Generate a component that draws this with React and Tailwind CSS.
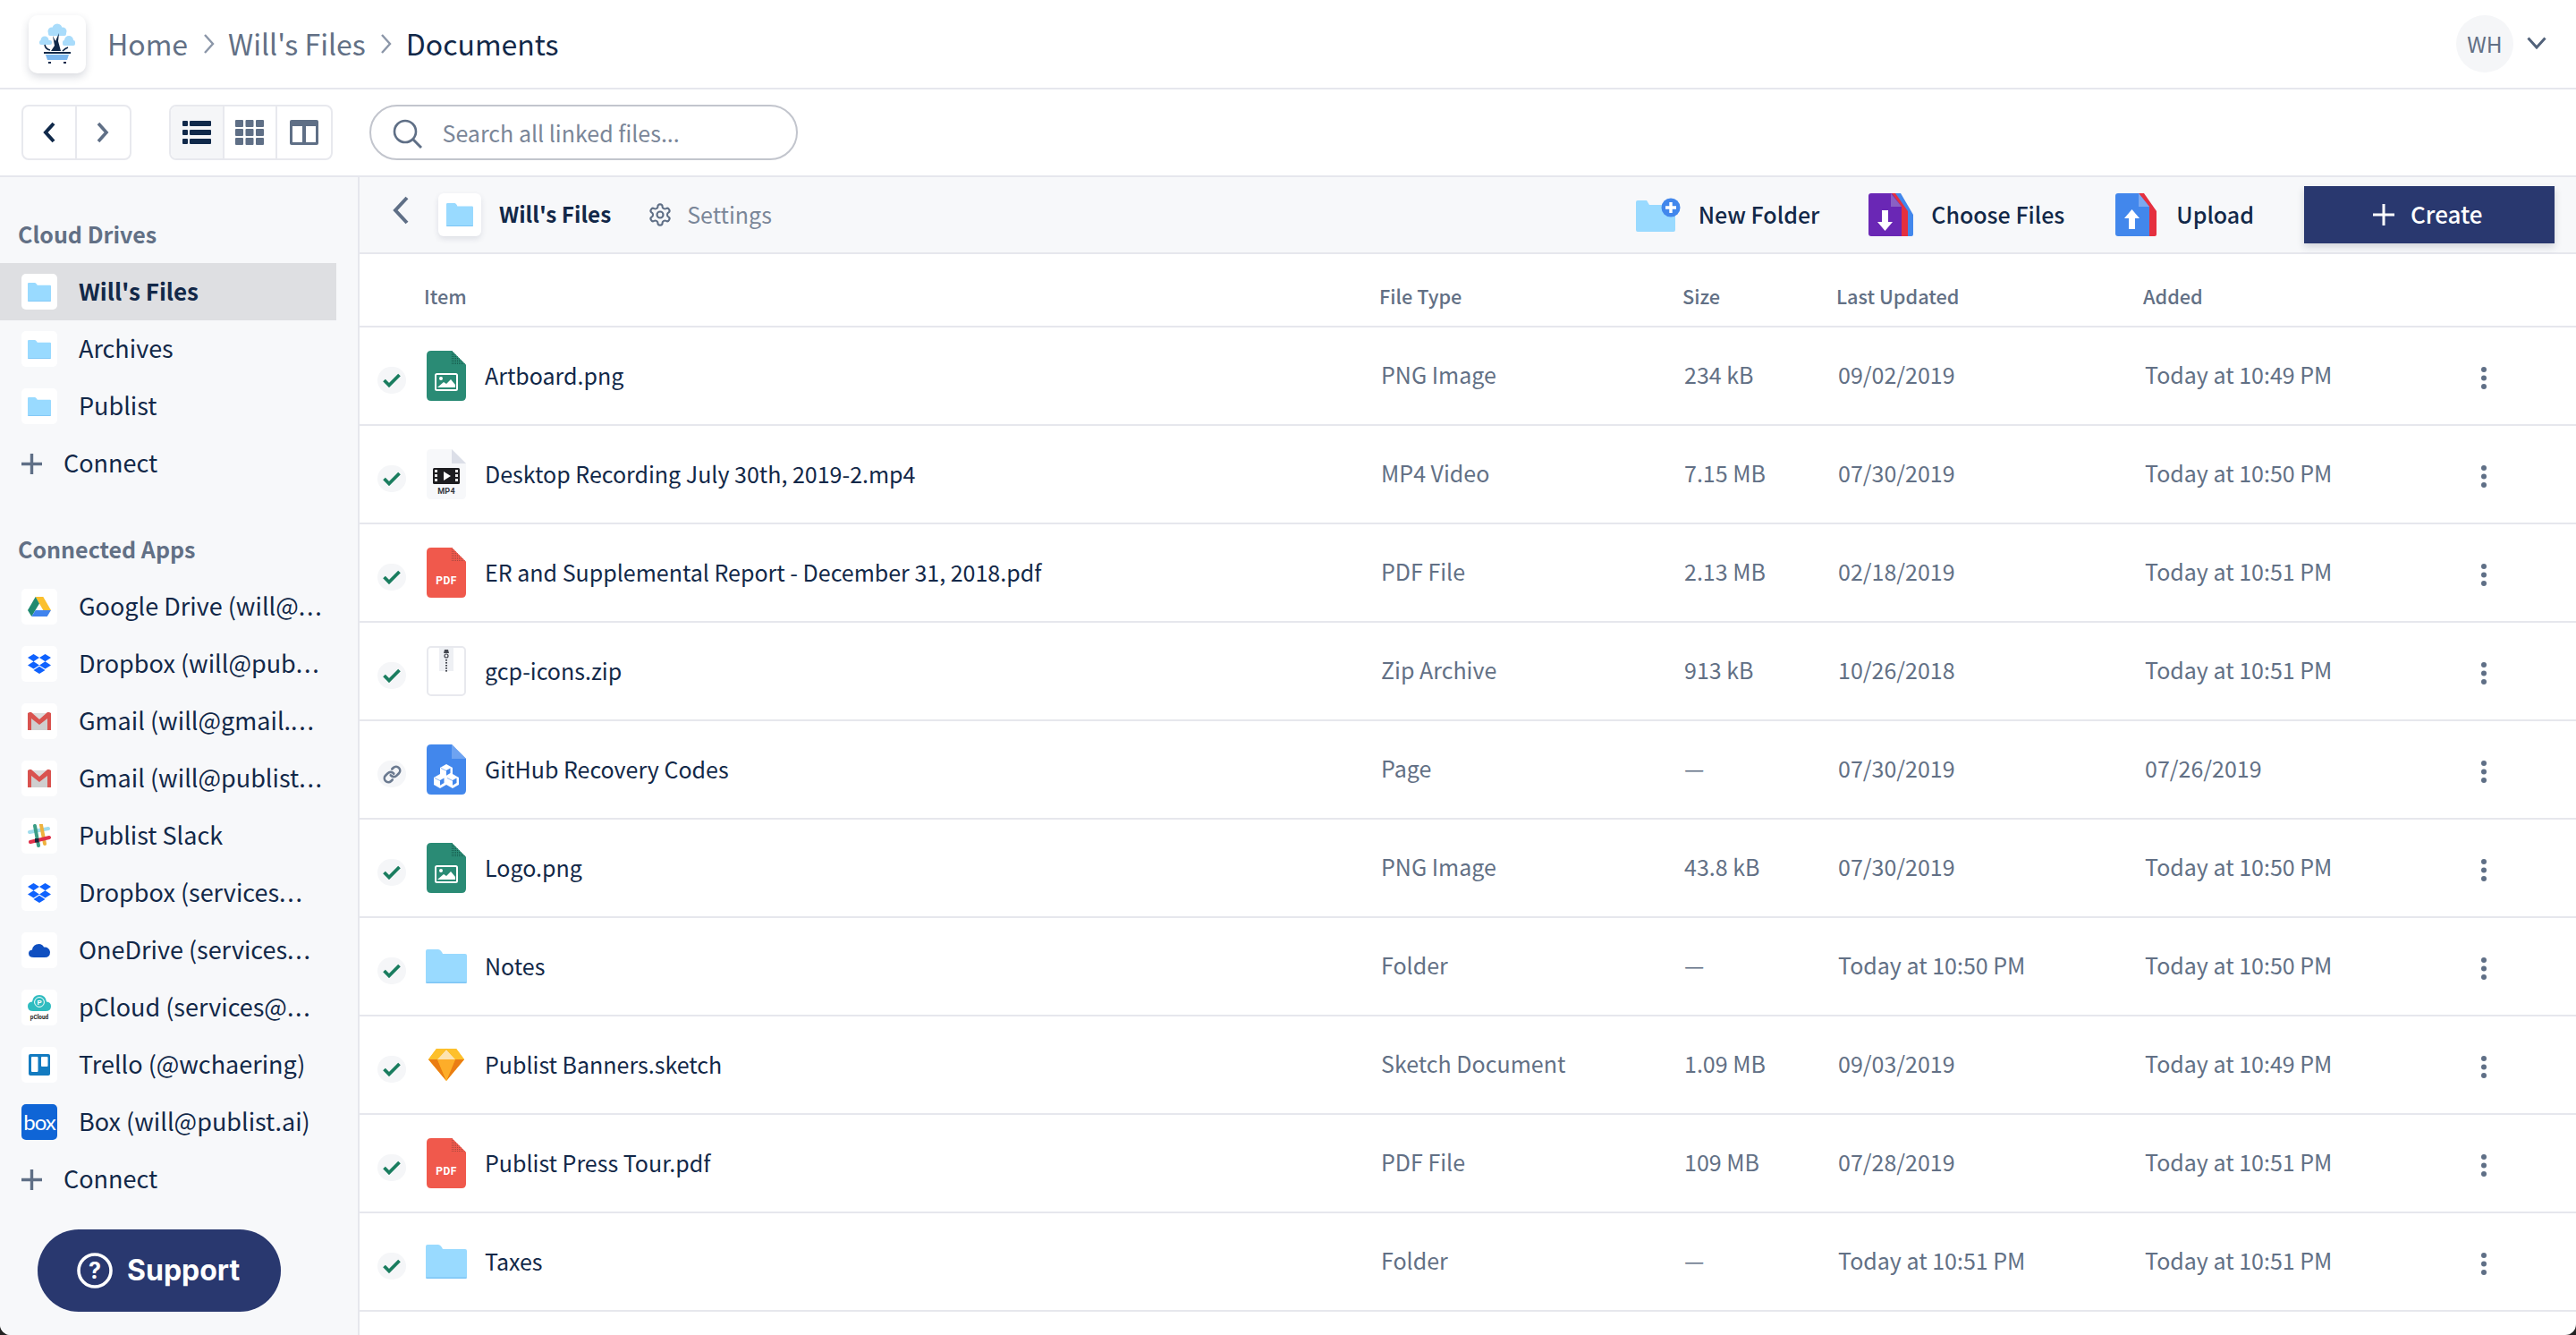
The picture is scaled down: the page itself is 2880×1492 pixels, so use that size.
import React from "react";
import { Link as LinkIcon } from "lucide-react";

const dark = "text-[#122848]";

function FolderIcon({ w, h }) {
  return (
    <svg width={w} height={h} viewBox="0 0 46 38" preserveAspectRatio="none">
      <path d="M2 0H14Q16 0 18 3L19 5H44Q46 5 46 7V36Q46 38 44 38H2Q0 38 0 36V2Q0 0 2 0Z" fill="#99daff" />
      <path d="M0 36.500H46V36.500Q46 38 44 38H2Q0 38 0 36.500Z" fill="#7cc4f5" />
    </svg>
  );
}

function Tile({ children, bg = "bg-white" }) {
  return <div className={`w-[40px] h-[40px] rounded-[5px] flex items-center justify-center shrink-0 ${bg}`}>{children}</div>;
}

function Sheet({ fill, fold, children, id, dots }) {
  return (
    <svg width="44" height="56" viewBox="0 0 44 56">
      <defs>
        <pattern id={id} width="2" height="2" patternUnits="userSpaceOnUse">
          <rect width="1" height="1" fill={dots} />
        </pattern>
      </defs>
      <path d="M5 0H28L44 16V51Q44 56 39 56H5Q0 56 0 51V5Q0 0 5 0Z" fill={fill} />
      <path d="M28 0L44 16H28Z" fill={fold} />
      <path d="M28 0L44 16H28Z" fill={`url(#${id})`} />
      {children}
    </svg>
  );
}

function ImageFile({ id }) {
  return (
    <Sheet id={id} fill="#2a8b75" fold="#2a8b75" dots="#14584a">
      <rect x="10" y="26" width="24" height="18" rx="1.5" fill="none" stroke="#fff" strokeWidth="2" />
      <circle cx="16" cy="31" r="2" fill="#fff" />
      <path d="M12 41L19 35L22 37L27 32L32 38V41Z" fill="#fff" />
    </Sheet>
  );
}

function PdfFile({ id }) {
  return (
    <Sheet id={id} fill="#f0594c" fold="#f0594c" dots="#a8483f">
      <text x="22" y="41" textAnchor="middle" fontSize="12" fontWeight="700" fill="#fff" letterSpacing="0.4" fontFamily="'Roboto','Liberation Sans',sans-serif">PDF</text>
    </Sheet>
  );
}

function VideoFile() {
  return (
    <svg width="44" height="56" viewBox="0 0 44 56">
      <path d="M5 0H28L44 16V51Q44 56 39 56H5Q0 56 0 51V5Q0 0 5 0Z" fill="#f7f8fa" />
      <path d="M28 0L44 16H28Z" fill="#dcdfe8" />
      <rect x="7" y="21" width="30" height="18" rx="1.5" fill="#1d1d20" />
      {[23, 28, 33].map((y) => (
        <g key={y}>
          <rect x="9" y={y} width="3" height="3" fill="#e8e8e8" />
          <rect x="32" y={y} width="3" height="3" fill="#e8e8e8" />
        </g>
      ))}
      <path d="M19 25L27 30L19 35Z" fill="#fff" />
      <text x="22" y="50" textAnchor="middle" fontSize="9" fontWeight="700" fill="#33363d" letterSpacing="0.3" fontFamily="'Roboto','Liberation Sans',sans-serif">MP4</text>
    </svg>
  );
}

function ZipFile() {
  return (
    <svg width="44" height="56" viewBox="0 0 44 56">
      <rect x="1" y="1" width="42" height="54" rx="4" fill="#fff" stroke="#e8e9ee" strokeWidth="2" />
      <rect x="14" y="2" width="16" height="26" fill="#eef0f4" />
      <path d="M20 4h4l1 4h-6z" fill="#44474f" />
      <circle cx="22" cy="11" r="2" fill="none" stroke="#44474f" strokeWidth="1.2" />
      {[15, 18, 21, 24, 27].map((y) => (
        <rect key={y} x="21" y={y} width="2" height="1.6" fill="#44474f" />
      ))}
    </svg>
  );
}

function Cube({ x, y }) {
  return (
    <g transform={`translate(${x} ${y})`}>
      <path d="M7 0L14 4V12L7 16L0 12V4Z" fill="#fff" />
      <path d="M7 7L11.500 4.600V10L7 12.800Z" fill="#4287ec" />
      <path d="M1 4.500L7 7.500" stroke="#4287ec" strokeWidth=".6" />
    </g>
  );
}

function PageFile() {
  return (
    <svg width="44" height="56" viewBox="0 0 44 56">
      <path d="M5 0H28L44 16V51Q44 56 39 56H5Q0 56 0 51V5Q0 0 5 0Z" fill="#4287ec" />
      <path d="M28 0L44 16H28Z" fill="#6ea3f1" />
      <Cube x="15" y="22" />
      <Cube x="8" y="33" />
      <Cube x="22" y="33" />
    </svg>
  );
}

function SketchIcon() {
  return (
    <svg width="40" height="36" viewBox="0 0 40 36">
      <path d="M9 0H31L40 12L20 36L0 12Z" fill="#fdb300" />
      <path d="M0 12H10L20 36Z" fill="#ea7d14" />
      <path d="M40 12H30L20 36Z" fill="#ea7d14" />
      <path d="M10 12H30L20 36Z" fill="#fdad29" />
      <path d="M9 0H20L10 12H0Z" fill="#fdc02c" />
      <path d="M31 0H20L30 12H40Z" fill="#fdc02c" />
      <path d="M20 1L30 12H10Z" fill="#fde3b0" />
    </svg>
  );
}

const drop = "M6 1.807L0 5.629l6 3.822 6.001-3.822L6 1.807zM18 1.807l-6 3.822 6 3.822 6-3.822-6-3.822zM0 13.274l6 3.822 6.001-3.822L6 9.452l-6 3.822zM18 9.452l-6 3.822 6 3.822 6-3.822-6-3.822zM6 18.371l6.001 3.822 6-3.822-6-3.822L6 18.371z";

function Dropbox() {
  return <svg width="26" height="26" viewBox="0 0 24 24"><path d={drop} fill="#0f62fe" /></svg>;
}
function Drive() {
  return (
    <svg width="26" height="22" viewBox="0 0 26 22">
      <path d="M8.700 0H17.300L26 15H17.300Z" fill="#fbc02d" />
      <path d="M8.700 0L13 7.500L4.300 22L0 15Z" fill="#1f8a70" />
      <path d="M8.700 15H26L21.700 22H4.300Z" fill="#3f83ee" />
    </svg>
  );
}
function Gmail() {
  return (
    <svg width="26" height="20" viewBox="0 0 26 20">
      <rect y="1" width="26" height="19" fill="#dcdcdc" />
      <path d="M4 20V7L13 14L22 7V20Z" fill="#cfcfcf" />
      <path d="M0 1L2 0H4L13 8L22 0H24L26 1V20H22V7L13 14L4 7V20H0Z" fill="#d9534f" />
    </svg>
  );
}
function Slack() {
  return (
    <svg width="26" height="26" viewBox="0 0 26 26">
      <g strokeWidth="4" strokeLinecap="round">
        <path d="M2 9L23 5" stroke="#9fdcec" />
        <path d="M8 2L12 24" stroke="#3b9d85" />
        <path d="M15 1L19 22" stroke="#eeb23f" />
        <path d="M3 20L24 15" stroke="#e0314a" />
      </g>
      <rect x="8" y="16" width="4.500" height="4.500" fill="#1a2438" />
    </svg>
  );
}
function OneDrive() {
  return (
    <svg width="24" height="16" viewBox="0 0 24 16">
      <path d="M6 16Q0 16 0 11.500Q0 8 4 7.500Q5 1 11.500 1Q15.500 1 17 4.500Q23 4 24 10Q24 16 18 16Z" fill="#0f4fc0" />
    </svg>
  );
}
function PCloud() {
  return (
    <svg width="28" height="32" viewBox="0 0 28 32">
      <path d="M7 20Q1 20 1 14.500Q1 10 6 9.500Q7 2 14 2Q21 2 22 9.500Q27 10 27 14.500Q27 20 21 20Z" fill="#2fbcc0" />
      <circle cx="14" cy="10" r="5.400" fill="none" stroke="#fff" strokeWidth="1" />
      <text x="14" y="13" textAnchor="middle" fontSize="8" fontWeight="700" fill="#fff" fontFamily="'Roboto',sans-serif">P</text>
      <text x="14" y="29" textAnchor="middle" fontSize="6.4" fontWeight="700" fill="#222" fontFamily="'Roboto',sans-serif">pCloud</text>
    </svg>
  );
}
function Trello() {
  return (
    <svg width="24" height="24" viewBox="0 0 24 24">
      <rect width="24" height="24" rx="2" fill="#137bc0" />
      <rect x="3" y="3" width="7.500" height="17" rx="1" fill="#fff" />
      <rect x="14" y="3" width="7.500" height="11" rx="1" fill="#fff" />
    </svg>
  );
}

function PlusRow() {
  return (
    <div className="h-[64px] flex items-center pl-[24px]">
      <svg width="23" height="23" viewBox="0 0 23 23"><path d="M11.500 0V23M0 11.500H23" stroke="#5f6f86" strokeWidth="3.4" /></svg>
      <span className={`ml-[24px] mb-[3px] text-[27px] leading-[40px] ${dark}`}>Connect</span>
    </div>
  );
}

function SideRow({ label, cut, icon, active, tileBg }) {
  return (
    <div className={`h-[64px] w-[376px] flex items-center pl-[24px] ${active ? "bg-[#dedfe2]" : ""}`}>
      <Tile bg={tileBg}>{icon}</Tile>
      <span className={`ml-[24px] mb-[3px] w-[276px] whitespace-nowrap leading-[40px] ${dark} ${active ? "font-semibold text-[26px]" : "text-[27px]"}`}>
        {label}
        {cut ? <span className="tracking-[1.7px]">...</span> : null}
      </span>
    </div>
  );
}

const folderSmall = <FolderIcon w={26} h={21} />;
const apps = [
  ["Google Drive (will@", <Drive />, true],
  ["Dropbox (will@pub", <Dropbox />, true],
  ["Gmail (will@gmail.", <Gmail />, true],
  ["Gmail (will@publist", <Gmail />, true],
  ["Publist Slack", <Slack />],
  ["Dropbox (services", <Dropbox />, true],
  ["OneDrive (services", <OneDrive />, true],
  ["pCloud (services@", <PCloud />, true],
  ["Trello (@wchaering)", <Trello />],
];

const rows = [
  ["Artboard.png", <ImageFile id="d1" />, "PNG Image", "234 kB", "09/02/2019", "Today at 10:49 PM"],
  ["Desktop Recording July 30th, 2019-2.mp4", <VideoFile />, "MP4 Video", "7.15 MB", "07/30/2019", "Today at 10:50 PM"],
  ["ER and Supplemental Report - December 31, 2018.pdf", <PdfFile id="d2" />, "PDF File", "2.13 MB", "02/18/2019", "Today at 10:51 PM"],
  ["gcp-icons.zip", <ZipFile />, "Zip Archive", "913 kB", "10/26/2018", "Today at 10:51 PM"],
  ["GitHub Recovery Codes", <PageFile />, "Page", "—", "07/30/2019", "07/26/2019", true],
  ["Logo.png", <ImageFile id="d3" />, "PNG Image", "43.8 kB", "07/30/2019", "Today at 10:50 PM"],
  ["Notes", <FolderIcon w={46} h={38} />, "Folder", "—", "Today at 10:50 PM", "Today at 10:50 PM"],
  ["Publist Banners.sketch", <SketchIcon />, "Sketch Document", "1.09 MB", "09/03/2019", "Today at 10:49 PM"],
  ["Publist Press Tour.pdf", <PdfFile id="d4" />, "PDF File", "109 MB", "07/28/2019", "Today at 10:51 PM"],
  ["Taxes", <FolderIcon w={46} h={38} />, "Folder", "—", "Today at 10:51 PM", "Today at 10:51 PM"],
];

function Cell({ children }) {
  return <span className="text-[25px] leading-[36px] text-[#627085] mb-[4px]">{children}</span>;
}

function Row({ r }) {
  const [name, icon, type, size, upd, added, linked] = r;
  return (
    <div className="h-[110px] border-b-2 border-[#e6e7ed] grid grid-cols-[1142px_339px_172px_343px_1fr] items-center">
      <div className="flex items-center">
        <div className="ml-[20px] mt-[10px] w-[32px] h-[30px] rounded-full bg-[#f5f6f8] flex items-center justify-center">
          {linked ? (
            <LinkIcon size={21} strokeWidth={3} className="text-[#6b7a90]" />
          ) : (
            <svg width="20" height="16" viewBox="0 0 20 16"><path d="M1.500 8L7 13.500L18.500 2" fill="none" stroke="#1a7d5f" strokeWidth="3.8" /></svg>
          )}
        </div>
        <div className="ml-[22px] w-[46px] h-[56px] flex items-center justify-center">{icon}</div>
        <span className={`ml-[20px] mb-[2px] text-[25px] leading-[40px] ${dark}`}>{name}</span>
      </div>
      <Cell>{type}</Cell>
      <Cell>{size}</Cell>
      <Cell>{upd}</Cell>
      <div className="flex items-center justify-between pr-[100px]">
        <Cell>{added}</Cell>
        <svg width="6" height="25" viewBox="0 0 6 25" className="mt-[4px]"><g fill="#5f6f86"><circle cx="3" cy="3" r="3" /><circle cx="3" cy="12.500" r="3" /><circle cx="3" cy="22" r="3" /></g></svg>
      </div>
    </div>
  );
}

function ToolCell({ children, active, last }) {
  return (
    <div className={`w-[59.500px] flex items-center justify-center ${last ? "" : "border-r-2 border-[#e8e9ee]"} ${active ? "bg-[#f5f6f8]" : ""}`}>{children}</div>
  );
}

function Action({ icon, label, className = "" }) {
  return (
    <div className={`flex items-center ${className}`}>
      {icon}
      <span className={`text-[25px] leading-[40px] font-medium mb-[2px] ${dark}`}>{label}</span>
    </div>
  );
}

export default function App() {
  return (
    <div className="w-[2880px] h-[1492px] overflow-hidden bg-[#222] font-['Noto_Sans_CJK_KR','Lato',sans-serif]">
      <div className="h-full flex flex-col bg-white rounded-b-[12px] overflow-hidden">
        <header className="h-[100px] shrink-0 border-b-2 border-[#e6e7ed] flex items-center pl-[32px] pr-[33px]">
          <div className="w-[64px] h-[65px] rounded-[10px] bg-white shadow-[0_4px_10px_rgba(40,50,80,0.18)] flex items-center justify-center">
            <svg width="42" height="46" viewBox="0 0 42 46">
              <g fill="#a9dcfb">
                <circle cx="21" cy="6" r="5.500" /><circle cx="15" cy="9" r="4.500" /><circle cx="27" cy="9" r="4.500" /><rect x="11" y="8" width="20" height="6" rx="2" />
                <circle cx="7" cy="19" r="4.500" /><rect x="1" y="19" width="14" height="5" rx="2" />
                <circle cx="34" cy="19" r="5" /><rect x="27" y="19" width="14" height="6" rx="2" />
              </g>
              <path d="M23 11L22 20L25 31H14L18 25L16 14L19 20Z" fill="#10294a" />
              <path d="M7 24Q8 29 13 30M33 27Q30 28 27 31" stroke="#10294a" strokeWidth="1.6" fill="none" />
              <rect x="6" y="32" width="30" height="2" fill="#10294a" />
              <path d="M8 35H34L32 41H10Z" fill="#7ab6ee" />
              <rect x="11" y="43" width="3" height="2" fill="#10294a" /><rect x="28" y="43" width="3" height="2" fill="#10294a" />
            </svg>
          </div>
          <span className="ml-[24px] mb-[3px] text-[32px] leading-[48px] text-[#627085]">Home</span>
          <svg className="ml-[17px]" width="14" height="24" viewBox="0 0 14 24"><path d="M2 2L11 12L2 22" fill="none" stroke="#8b96a8" strokeWidth="2.4" /></svg>
          <span className="ml-[14px] mb-[3px] text-[32px] leading-[48px] text-[#627085]">Will's Files</span>
          <svg className="ml-[16px]" width="14" height="24" viewBox="0 0 14 24"><path d="M2 2L11 12L2 22" fill="none" stroke="#8b96a8" strokeWidth="2.4" /></svg>
          <span className={`ml-[15px] mb-[3px] text-[32px] leading-[48px] ${dark}`}>Documents</span>
          <div className="ml-auto flex items-center">
            <div className="w-[64px] h-[64px] rounded-full bg-[#f5f6f8] flex items-center justify-center text-[24.500px] leading-[36px] text-[#627085]">WH</div>
            <svg className="ml-[15px] mb-[2px]" width="22" height="14" viewBox="0 0 22 14"><path d="M1.500 1.500L11 12L20.500 1.500" fill="none" stroke="#52627a" strokeWidth="3" /></svg>
          </div>
        </header>

        <div className="h-[98px] shrink-0 border-b-2 border-[#e6e7ed] flex items-center pl-[24px]">
          <div className="h-[62px] flex rounded-[8px] border-2 border-[#e8e9ee] overflow-hidden">
            <ToolCell><svg width="16" height="24" viewBox="0 0 16 24"><path d="M13 2L4 12L13 22" fill="none" stroke="#10294a" strokeWidth="4" /></svg></ToolCell>
            <ToolCell last><svg width="16" height="24" viewBox="0 0 16 24"><path d="M3 2L12 12L3 22" fill="none" stroke="#5f6f86" strokeWidth="3.6" /></svg></ToolCell>
          </div>
          <div className="ml-[42px] h-[62px] flex rounded-[8px] border-2 border-[#e8e9ee] overflow-hidden">
            <ToolCell active><svg width="32" height="26" viewBox="0 0 32 26" fill="#10294a"><rect y="0" width="6" height="6" rx="1" /><rect x="8" y="0" width="24" height="6" rx="1" /><rect y="10" width="6" height="6" rx="1" /><rect x="8" y="10" width="24" height="6" rx="1" /><rect y="20" width="6" height="6" rx="1" /><rect x="8" y="20" width="24" height="6" rx="1" /></svg></ToolCell>
            <ToolCell><svg width="32" height="28" viewBox="0 0 32 28" fill="#5f6f86">{[0, 11.5, 23].map((x) => [0, 10, 20].map((y) => <rect key={`${x}-${y}`} x={x} y={y} width="9" height="8" rx="1" />))}</svg></ToolCell>
            <ToolCell last><svg width="32" height="28" viewBox="0 0 32 28"><rect width="32" height="28" rx="2" fill="#5f6f86" /><rect x="3" y="7" width="11" height="18" fill="#fff" /><rect x="18" y="7" width="11" height="18" fill="#fff" /></svg></ToolCell>
          </div>
          <div className="ml-[41px] w-[479px] h-[62px] rounded-full border-2 border-[#c2c5cd] flex items-center pl-[24px]">
            <svg width="33" height="33" viewBox="0 0 33 33" className="mt-[2px]"><circle cx="14" cy="14" r="12" fill="none" stroke="#5f6f86" strokeWidth="2.6" /><path d="M23 23L32 32" stroke="#5f6f86" strokeWidth="3" /></svg>
            <span className="ml-[23px] text-[25px] leading-[40px] text-[#7a8698]">Search all linked files...</span>
          </div>
        </div>

        <div className="flex flex-1 min-h-0">
          <aside className="w-[402px] shrink-0 border-r-2 border-[#e6e7ed] bg-[#f7f8fa] pt-[43px]">
            <div className="h-[40px] pl-[20px] text-[25px] leading-[40px] font-semibold text-[#627085]">Cloud Drives</div>
            <div className="mt-[13px]">
              <SideRow active label="Will's Files" icon={folderSmall} />
              <SideRow label="Archives" icon={folderSmall} />
              <SideRow label="Publist" icon={folderSmall} />
              <PlusRow />
            </div>
            <div className="mt-[43px] h-[40px] pl-[20px] text-[25px] leading-[40px] font-semibold text-[#627085]">Connected Apps</div>
            <div className="mt-[13px]">
              {apps.map(([l, i, c], n) => <SideRow key={n} label={l} icon={i} cut={c} />)}
              <SideRow label="Box (will@publist.ai)" tileBg="bg-[#0f65d6]" icon={<span className="text-[24px] leading-[28px] text-white font-['Lato',sans-serif] tracking-[-1px]">box</span>} />
              <PlusRow />
            </div>
            <div className="mt-[24px] ml-[42px] w-[272px] h-[92px] rounded-full bg-[#29386f] flex items-center pl-[44px]">
              <svg width="40" height="40" viewBox="0 0 40 40"><circle cx="20" cy="20" r="18" fill="none" stroke="#fff" strokeWidth="3.6" /><text x="20" y="29" textAnchor="middle" fontSize="25" fontWeight="700" fill="#fff" fontFamily="'Inter',sans-serif">?</text></svg>
              <span className="ml-[16px] text-[32px] leading-[40px] font-bold text-white font-['Inter',sans-serif]">Support</span>
            </div>
          </aside>

          <main className="flex-1 min-w-0">
            <div className="h-[86px] border-b-2 border-[#e6e7ed] bg-[#f7f8fa] flex items-center pl-[36px] pr-[24px]">
              <svg width="20" height="32" viewBox="0 0 20 32" className="mb-[10px]"><path d="M17 2L4 16L17 30" fill="none" stroke="#5f6f86" strokeWidth="4" /></svg>
              <div className="ml-[32px] w-[48px] h-[48px] rounded-[6px] bg-white shadow-[0_3px_6px_rgba(40,50,80,0.12)] flex items-center justify-center"><FolderIcon w={30} h={26} /></div>
              <span className={`ml-[20px] mb-[2px] text-[24.300px] leading-[40px] font-semibold ${dark}`}>Will's Files</span>
              <svg className="ml-[41px]" width="28" height="28" viewBox="0 0 24 24" fill="none" stroke="#5f6f86" strokeWidth="1.8"><path d="M12.220 2h-.44a2 2 0 0 0-2 2v.18a2 2 0 0 1-1 1.730l-.43.25a2 2 0 0 1-2 0l-.15-.08a2 2 0 0 0-2.730.73l-.22.38a2 2 0 0 0 .73 2.730l.15.1a2 2 0 0 1 1 1.720v.51a2 2 0 0 1-1 1.740l-.15.09a2 2 0 0 0-.73 2.730l.22.38a2 2 0 0 0 2.730.73l.15-.08a2 2 0 0 1 2 0l.43.25a2 2 0 0 1 1 1.730V20a2 2 0 0 0 2 2h.44a2 2 0 0 0 2-2v-.18a2 2 0 0 1 1-1.730l.43-.25a2 2 0 0 1 2 0l.15.08a2 2 0 0 0 2.730-.73l.22-.39a2 2 0 0 0-.73-2.730l-.15-.08a2 2 0 0 1-1-1.740v-.5a2 2 0 0 1 1-1.740l.15-.09a2 2 0 0 0 .73-2.730l-.22-.38a2 2 0 0 0-2.730-.73l-.15.08a2 2 0 0 1-2 0l-.43-.25a2 2 0 0 1-1-1.730V4a2 2 0 0 0-2-2z" /><circle cx="12" cy="12" r="3" /></svg>
              <span className="ml-[16px] mb-[2px] text-[25px] leading-[40px] text-[#7a8698]">Settings</span>
              <div className="ml-auto flex items-center">
                <Action label="New Folder" icon={
                  <svg width="50" height="38" viewBox="0 0 50 38" className="mr-[20px]">
                    <path d="M2 3H12L15 8H44V36Q44 38 42 38H2Q0 38 0 36V5Q0 3 2 3Z" fill="#99daff" />
                    <circle cx="39" cy="11" r="10.500" fill="#4287ec" />
                    <path d="M39 5V17M33 11H45" stroke="#fff" strokeWidth="3.4" />
                  </svg>} />
                <Action className="ml-[55px]" label="Choose Files" icon={
                  <svg width="50" height="48" viewBox="0 0 50 48" className="mr-[20px]">
                    <path d="M12 0H36L50 24V46Q50 48 48 48H12Z" fill="#4287ec" />
                    <path d="M6 0H30L44 20V48H6Z" fill="#e5303f" />
                    <path d="M3 0H26L37 15V48H3Q0 48 0 45V3Q0 0 3 0Z" fill="#6a27b5" />
                    <path d="M25 0L37 15H25Z" fill="#8a60c4" />
                    <path d="M15 19H22V32H27L18.500 42L10 32H15Z" fill="#fff" />
                  </svg>} />
                <Action className="ml-[57px]" label="Upload" icon={
                  <svg width="46" height="48" viewBox="0 0 46 48" className="mr-[22px]">
                    <path d="M6 0H32L46 20V46Q46 48 44 48H6Z" fill="#e5303f" />
                    <path d="M3 0H26L38 15V48H3Q0 48 0 45V3Q0 0 3 0Z" fill="#4287ec" />
                    <path d="M26 0L38 15H26Z" fill="#7ba9f0" />
                    <path d="M15 40V28H10L18.500 18L27 28H22V40Z" fill="#fff" />
                  </svg>} />
                <div className="ml-[56px] w-[280px] h-[64px] bg-[#29386f] shadow-[0_4px_8px_rgba(40,50,80,0.18)] flex items-center pl-[77px]">
                  <svg width="24" height="24" viewBox="0 0 24 24"><path d="M12 0V24M0 12H24" stroke="#fff" strokeWidth="3" /></svg>
                  <span className="ml-[18px] mb-[2px] text-[26px] leading-[40px] font-medium text-white">Create</span>
                </div>
              </div>
            </div>
            <div className="h-[82px] border-b-2 border-[#e6e7ed] pt-[14px] grid grid-cols-[1140px_339px_172px_343px_1fr] items-center text-[21.700px] leading-[32px] font-medium text-[#627085]">
              <span className="pl-[72px]">Item</span>
              <span>File Type</span>
              <span>Size</span>
              <span>Last Updated</span>
              <span>Added</span>
            </div>
            {rows.map((r, i) => <Row key={i} r={r} />)}
          </main>
        </div>
      </div>
    </div>
  );
}
